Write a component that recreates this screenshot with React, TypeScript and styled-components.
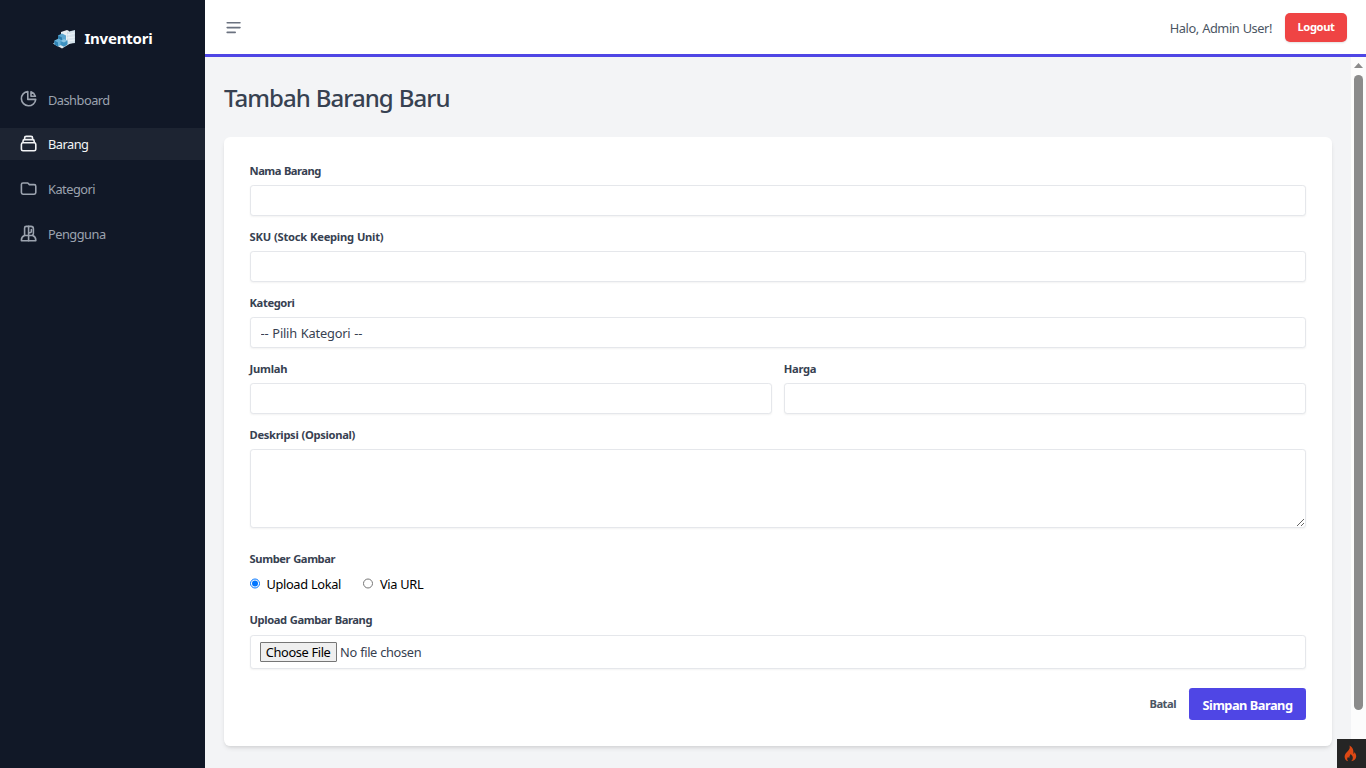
import React from 'react';
import styled, { createGlobalStyle, css } from 'styled-components';

const GlobalStyle = createGlobalStyle`
  *, *::before, *::after { box-sizing: border-box; }
  body {
    margin: 0;
    overflow: hidden;
    font-family: 'Segoe UI', 'Noto Sans', 'Open Sans', sans-serif;
    font-size: 12.8px;
    line-height: 19px;
    color: #000;
  }
  button, input, select, textarea { font: inherit; letter-spacing: inherit; margin: 0; }
`;

const Shell = styled.div`
  display: flex;
  width: 100vw;
  height: 768px;
  background: #f3f4f6;
`;

const Sidebar = styled.aside`
  flex: 0 0 205px;
  background: #111827;
`;

const Brand = styled.div`
  display: flex;
  align-items: center;
  justify-content: center;
  gap: 8px;
  height: 45px;
  margin-top: 16px;
  margin-bottom: 22px;
`;

const BrandName = styled.span`
  color: #fff;
  font-size: 15px;
  font-weight: 700;
  letter-spacing: -0.2px;
`;

const Nav = styled.nav`
  display: flex;
  flex-direction: column;
  gap: 12.8px;
`;

const NavItem = styled.a<{ $active?: boolean }>`
  display: flex;
  align-items: center;
  gap: 9.6px;
  height: 32px;
  padding-left: 19.2px;
  letter-spacing: -0.5px;
  color: ${(p) => (p.$active ? '#f3f4f6' : '#9ca3af')};
  background: ${(p) => (p.$active ? '#1d2432' : 'transparent')};
`;

const NavText = styled.span`
  padding-top: 2px;
`;

const Icon = styled.svg`
  width: 19.2px;
  height: 19.2px;
  fill: none;
  stroke: currentColor;
  stroke-width: 2;
  stroke-linecap: round;
  stroke-linejoin: round;
`;

const Content = styled.div`
  flex: 1;
  display: flex;
  flex-direction: column;
  min-width: 0;
`;

const Header = styled.header`
  display: flex;
  align-items: center;
  justify-content: space-between;
  height: 57px;
  padding: 0 19px;
  background: #fff;
  border-bottom: 3px solid #4f46e5;
`;

const MenuButton = styled.button`
  display: flex;
  padding: 1px 0 0;
  border: 0;
  background: none;
  color: #6b7280;
`;

const Account = styled.div`
  display: flex;
  align-items: center;
  gap: 13px;
`;

const Greeting = styled.span`
  color: #4b5563;
  letter-spacing: -0.42px;
  word-spacing: 0.5px;
  padding-top: 2px;
`;

const LogoutButton = styled.button`
  width: 62px;
  height: 29px;
  padding: 0;
  border: 0;
  border-radius: 5px;
  background: #ef4444;
  color: #fff;
  font-size: 11.2px;
  font-weight: 700;
  line-height: 16px;
  letter-spacing: -0.4px;
  box-shadow: 0 1px 2px rgba(0, 0, 0, 0.12);
`;

const Scroller = styled.div`
  flex: 1;
  display: flex;
  min-height: 0;
`;

const Main = styled.main`
  flex: 1;
  padding: 25px 19px 0;
`;

const Title = styled.h1`
  margin: 0 0 23px;
  height: 32px;
  color: #374151;
  font-size: 24px;
  font-weight: 500;
  line-height: 32px;
  letter-spacing: -0.98px;
  word-spacing: 0.8px;
`;

const Card = styled.section`
  height: 609px;
  padding: 26px 26px 0 25.6px;
  border-radius: 6.4px;
  background: #fff;
  box-shadow: 0 3px 5px -1px rgba(0, 0, 0, 0.1), 0 2px 3px -1px rgba(0, 0, 0, 0.06);
`;

const Field = styled.div<{ $after?: number }>`
  flex: 1;
  margin-bottom: ${(p) => p.$after ?? 13}px;
`;

const Pair = styled.div`
  display: flex;
  gap: 12px;
`;

const Label = styled.label<{ $spacing?: number; $gap?: number }>`
  display: block;
  height: 16px;
  margin-bottom: ${(p) => p.$gap ?? 6}px;
  color: #374151;
  font-size: 11.2px;
  font-weight: 700;
  line-height: 16px;
  letter-spacing: ${(p) => p.$spacing ?? -0.3}px;
  word-spacing: 0.6px;
`;

const control = css`
  display: block;
  width: 100%;
  border: 1px solid #e5e7eb;
  border-radius: 3.2px;
  background: #fff;
  color: #374151;
  box-shadow: 0 1px 2px rgba(0, 0, 0, 0.05);
  outline: none;
`;

const Input = styled.input`
  ${control}
  height: 31px;
  padding: 0 10px;
`;

const Select = styled.select`
  ${control}
  appearance: none;
  height: 31px;
  padding: 1px 10px 0;
  letter-spacing: -0.2px;
  word-spacing: 0.8px;
`;

const TextArea = styled.textarea`
  ${control}
  height: 79px;
  resize: vertical;
`;

const FileInput = styled.input`
  ${control}
  height: 34px;
  padding: 6px 9px;
  letter-spacing: -0.35px;
  word-spacing: 0.3px;

  &::file-selector-button {
    width: 77px;
    height: 20px;
    margin: 0 3.5px 0 0;
    padding: 0;
    border: 1px solid #767676;
    border-radius: 1px;
    background: #efefef;
    color: #000;
    font: inherit;
    line-height: 18px;
    letter-spacing: inherit;
  }
`;

const Choices = styled.div`
  display: flex;
  gap: 22px;
  height: 19px;
`;

const Choice = styled.label`
  display: flex;
  align-items: center;
  gap: 6.5px;
  letter-spacing: -0.36px;
  word-spacing: 0.4px;
`;

const Radio = styled.input`
  width: 10.4px;
  height: 10.4px;
  margin: 0 0 2px;
`;

const Actions = styled.div`
  display: flex;
  align-items: center;
  justify-content: flex-end;
  gap: 13px;
`;

const Cancel = styled.a`
  padding-bottom: 1px;
  color: #4b5563;
  font-size: 11.2px;
  font-weight: 700;
  letter-spacing: -0.5px;
`;

const Submit = styled.button`
  width: 117px;
  height: 32px;
  padding: 2px 0 0;
  border: 0;
  border-radius: 3.2px;
  background: #4f46e5;
  color: #fff;
  font-weight: 700;
  letter-spacing: -0.5px;
`;

const ScrollTrack = styled.div`
  display: flex;
  flex-direction: column;
  align-items: center;
  width: 15px;
  padding-top: 6px;
  background: #fcfcfc;
`;

const ScrollArrow = styled.svg`
  display: block;
  width: 9px;
  height: 5px;
  margin-bottom: 7px;
  fill: #8b8b8b;
`;

const ScrollThumb = styled.div`
  width: 9px;
  height: 635px;
  border-radius: 5px;
  background: #8b8b8b;
`;

const DebugBadge = styled.div`
  position: fixed;
  right: 0;
  bottom: 0;
  display: flex;
  align-items: center;
  justify-content: center;
  width: 29px;
  height: 29px;
  padding-right: 2px;
  background: #252525;
`;

const BrandLogo = () => (
  <svg width="24" height="20" viewBox="0 0 24 20">
    <path d="M1 14.500l8-5 10 4.500-9 5.500z" fill="#dfe8ee" />
    <path d="M9 3l6-2 2 1v12l-5 2-3-3z" fill="#e8eef2" />
    <path d="M15 3l8-2v13l-8 1z" fill="#c9dae5" />
    <path d="M17 3v12M19 2.500v12M21 2v12M15 6l8-2M15 9l8-1M15 12l8-1" stroke="#f4f8fa" strokeWidth=".7" />
    <path d="M6 6.500l4-2 4 2v5l-4 2-4-2z" fill="#5aa5cf" />
    <path d="M6 6.500l4 2v5l-4-2z" fill="#2c7cab" />
    <path d="M2.500 11.500l4-2 3.500 2v4l-4 2-3.500-2z" fill="#68b2da" />
    <path d="M2.500 11.500l3.500 2v4l-3.500-2z" fill="#2f83b4" />
    <path d="M8.500 12l3.500-2 3.500 1.500v4l-3.500 2.300-3.500-1.800z" fill="#3d91c0" />
    <path d="M8.500 12l3.500-2 3.500 1.500-3.500 2z" fill="#8cc6e4" />
  </svg>
);

const NAV_ITEMS = [
  {
    label: 'Dashboard',
    paths: ['M11 3.055A9.001 9.001 0 1020.945 13H11V3.055z', 'M20.488 9H15V3.512A9.025 9.025 0 0120.488 9z'],
  },
  {
    label: 'Barang',
    active: true,
    paths: [
      'M19 11H5m14 0a2 2 0 012 2v6a2 2 0 01-2 2H5a2 2 0 01-2-2v-6a2 2 0 012-2m14 0V9a2 2 0 00-2-2M5 11V9a2 2 0 012-2m0 0V5a2 2 0 012-2h6a2 2 0 012 2v2M7 7h10',
    ],
  },
  { label: 'Kategori', paths: ['M3 7v10a2 2 0 002 2h14a2 2 0 002-2V9a2 2 0 00-2-2h-6l-2-2H5a2 2 0 00-2 2z'] },
  {
    label: 'Pengguna',
    paths: [
      'M7 14V5a2 2 0 012-2h6a3 3 0 013 3v5a3 3 0 01-1 3',
      'M12 3v18M12 11h1.500a2 2 0 002-2V7',
      'M3 21v-1a6 6 0 014-5.700h10a6 6 0 014 5.700v1z',
    ],
  },
];

export default function App() {
  return (
    <Shell>
      <GlobalStyle />
      <Sidebar>
        <Brand>
          <BrandLogo />
          <BrandName>Inventori</BrandName>
        </Brand>
        <Nav>
          {NAV_ITEMS.map((item) => (
            <NavItem key={item.label} $active={item.active}>
              <Icon viewBox="0 0 24 24">
                {item.paths.map((d) => (
                  <path key={d} d={d} />
                ))}
              </Icon>
              <NavText>{item.label}</NavText>
            </NavItem>
          ))}
        </Nav>
      </Sidebar>
      <Content>
        <Header>
          <MenuButton aria-label="Menu">
            <Icon viewBox="0 0 24 24">
              <path d="M4 6h16M4 12h16M4 18h10" />
            </Icon>
          </MenuButton>
          <Account>
            <Greeting>Halo, Admin User!</Greeting>
            <LogoutButton>Logout</LogoutButton>
          </Account>
        </Header>
        <Scroller>
          <Main>
            <Title>Tambah Barang Baru</Title>
            <Card>
              <Field>
                <Label $spacing={-0.52}>Nama Barang</Label>
                <Input />
              </Field>
              <Field>
                <Label $spacing={-0.28}>SKU (Stock Keeping Unit)</Label>
                <Input />
              </Field>
              <Field>
                <Label $spacing={-0.4}>Kategori</Label>
                <Select>
                  <option>-- Pilih Kategori --</option>
                </Select>
              </Field>
              <Pair>
                <Field>
                  <Label $spacing={-0.25}>Jumlah</Label>
                  <Input />
                </Field>
                <Field>
                  <Label>Harga</Label>
                  <Input />
                </Field>
              </Pair>
              <Field $after={23}>
                <Label $spacing={-0.33}>Deskripsi (Opsional)</Label>
                <TextArea />
              </Field>
              <Field $after={18}>
                <Label $spacing={-0.43} $gap={8}>
                  Sumber Gambar
                </Label>
                <Choices>
                  <Choice>
                    <Radio type="radio" name="source" defaultChecked />
                    Upload Lokal
                  </Choice>
                  <Choice>
                    <Radio type="radio" name="source" />
                    Via URL
                  </Choice>
                </Choices>
              </Field>
              <Field $after={19}>
                <Label $spacing={-0.43} $gap={7}>
                  Upload Gambar Barang
                </Label>
                <FileInput type="file" />
              </Field>
              <Actions>
                <Cancel>Batal</Cancel>
                <Submit>Simpan Barang</Submit>
              </Actions>
            </Card>
          </Main>
          <ScrollTrack>
            <ScrollArrow viewBox="0 0 9 5">
              <path d="M4.500 0L9 5H0z" />
            </ScrollArrow>
            <ScrollThumb />
          </ScrollTrack>
        </Scroller>
      </Content>
      <DebugBadge>
        <svg width="13" height="17" viewBox="0 0 13 17">
          <path
            d="M5.500 0.500c.8 2.500-.2 4-1.800 5.700C2 8 .6 9.500.6 11.700c0 2.300 1.400 3.900 3.600 4.600-1.500-1.500-1.300-3.200.1-4.500.1.900.5 1.300 1.100 1.500-.5-1.900.9-2.700 1.100-4.200 1.500 1 2.800 2.800 2.200 4.700-.2 1.200-.9 2-1.800 2.500 3.100-.5 5.200-2.200 5.300-4.800.1-1.700-.9-3-1.700-4.400-.1 1-.4 1.600-1.100 1.900C9.900 5.600 8.800 2.100 5.500.5z"
            fill="#dd4814"
          />
        </svg>
      </DebugBadge>
    </Shell>
  );
}
